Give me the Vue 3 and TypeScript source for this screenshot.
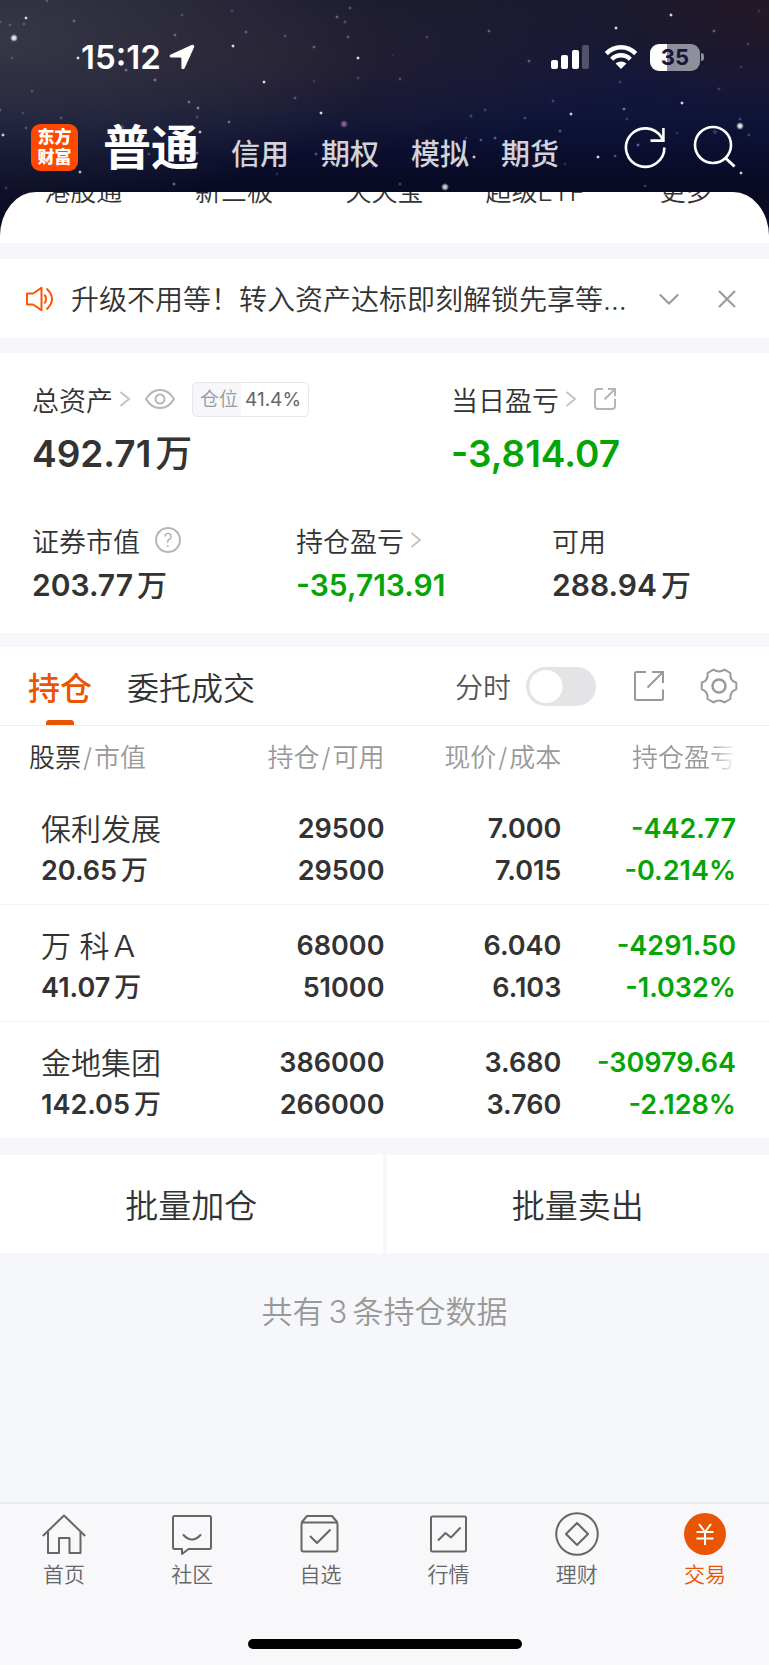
<script setup lang="ts">
import { computed, ref } from 'vue'

interface Holding {
  name: string
  value: string
  held: string
  usable: string
  price: string
  cost: string
  profit: string
  rate: string
}

interface Tab {
  id: string
  label: string
}

const accounts = ['普通', '信用', '期权', '模拟', '期货']
const activeAccount = ref('普通')
const shortcuts = ['港股通', '新三板', '天天宝', '超级ETF', '更多']

const position = ref(41.4)
const tagFill = computed(() => ({
  background: `linear-gradient(to right, #f6f7fb ${position.value}%, #ffffff ${position.value}%)`,
}))

const battery = ref(35)
const batteryFill = computed(() => ({
  background: `linear-gradient(to right, #ffffff ${battery.value}%, #8f8f9b ${battery.value}%)`,
}))

const minuteMode = ref(false)

const holdings: Holding[] = [
  { name: '保利发展', value: '20.65', held: '29500', usable: '29500', price: '7.000', cost: '7.015', profit: '-442.77', rate: '-0.214%' },
  { name: '万 科Ａ', value: '41.07', held: '68000', usable: '51000', price: '6.040', cost: '6.103', profit: '-4291.50', rate: '-1.032%' },
  { name: '金地集团', value: '142.05', held: '386000', usable: '266000', price: '3.680', cost: '3.760', profit: '-30979.64', rate: '-2.128%' },
]

const tabs: Tab[] = [
  { id: 'home', label: '首页' },
  { id: 'community', label: '社区' },
  { id: 'watch', label: '自选' },
  { id: 'market', label: '行情' },
  { id: 'wealth', label: '理财' },
  { id: 'trade', label: '交易' },
]
const activeTab = ref('trade')

// x, y, radius, opacity, colour
type Star = [number, number, number, number, string]
const W = '#ffffff'
const P = '#8b80d8'
const M = '#b38ac8'
const stars: Star[] = [
  [14, 38, 4, 0.95, W], [26, 18, 2, 0.9, W], [10, 25, 2, 0.5, P], [24, 24, 2, 0.5, P], [0, 22, 2, 0.5, P],
  [47, 1, 2, 0.5, P], [74, 21, 2, 0.7, P], [78, 58, 2, 0.95, W], [12, 58, 2, 0.4, P], [32, 91, 2, 0.5, P],
  [126, 70, 2, 0.7, M], [155, 80, 2, 0.8, M], [175, 35, 2, 0.6, M], [182, 15, 2, 0.45, P], [232, 11, 2, 0.4, P],
  [233, 46, 2, 0.95, W], [246, 32, 2, 0.7, P], [285, 36, 2, 0.5, P], [314, 47, 2, 0.6, M], [337, 17, 2, 0.7, P],
  [345, 22, 2, 0.5, P], [350, 8, 2, 0.6, P], [348, 37, 2, 0.6, P], [358, 58, 2, 0.95, W], [358, 78, 2, 0.4, P],
  [264, 82, 2, 0.95, W], [295, 98, 2, 0.6, P], [321, 113, 2, 0.95, W], [344, 124, 4, 0.7, M], [314, 81, 2, 0.3, P],
  [198, 108, 2, 0.9, M], [189, 102, 2, 0.7, M], [229, 122, 2, 0.7, M], [200, 132, 2, 0.8, W], [197, 117, 2, 0.4, P],
  [3, 135, 2, 0.9, W], [0, 110, 2, 0.6, P], [23, 113, 2, 0.4, P], [26, 128, 2, 0.5, P], [61, 118, 2, 0.5, P],
  [80, 172, 2, 0.8, W], [174, 184, 2, 0.8, P], [197, 153, 2, 0.8, P], [316, 154, 2, 0.6, P], [276, 154, 3, 0.7, P],
  [277, 174, 2, 0.3, P], [373, 166, 2, 0.4, P], [6, 188, 2, 0.4, P], [149, 154, 2, 0.5, P], [122, 127, 3, 0.4, P],
  [489, 31, 2, 0.7, P], [427, 37, 2, 0.4, P], [529, 61, 2, 0.7, P], [616, 28, 2, 0.95, W], [671, 15, 2, 0.95, W],
  [714, 31, 2, 0.6, M], [748, 44, 2, 0.4, P], [759, 11, 2, 0.3, P], [741, 67, 2, 0.3, P], [719, 89, 2, 0.4, P],
  [682, 103, 2, 0.95, W], [624, 109, 2, 0.9, P], [571, 114, 2, 0.9, W], [553, 101, 2, 0.5, P], [620, 82, 2, 0.4, P],
  [525, 118, 2, 0.5, P], [485, 110, 2, 0.4, P], [471, 116, 2, 0.5, P], [560, 131, 2, 0.6, P], [495, 138, 2, 0.7, P],
  [481, 140, 2, 0.6, P], [466, 138, 2, 0.4, P], [517, 148, 4, 0.8, P], [474, 157, 2, 0.9, W], [598, 157, 2, 0.95, W],
  [638, 145, 2, 0.8, P], [615, 156, 2, 0.6, P], [740, 126, 4, 0.95, W], [740, 119, 2, 0.5, P], [749, 135, 2, 0.5, P],
  [741, 173, 2, 0.9, W], [445, 187, 4, 0.85, W], [400, 184, 2, 0.5, P], [645, 186, 2, 0.4, P], [715, 132, 3, 0.4, P],
  [627, 119, 2, 0.4, P], [400, 79, 2, 0.5, P], [677, 133, 2, 0.3, P], [565, 164, 2, 0.3, P], [393, 55, 1, 0.5, P],
]
</script>

<template>
  <div class="page">
    <header class="hero">
      <svg class="stars" viewBox="0 0 769 243" preserveAspectRatio="xMidYMin slice" aria-hidden="true">
        <defs>
          <radialGradient v-for="c in [W, P, M]" :id="'glow' + c.slice(1)" :key="c">
            <stop offset="0" :stop-color="c" />
            <stop offset="0.4" :stop-color="c" stop-opacity="0.85" />
            <stop offset="1" :stop-color="c" stop-opacity="0" />
          </radialGradient>
        </defs>
        <circle v-for="(s, i) in stars" :key="i" :cx="s[0]" :cy="s[1]" :r="s[2]" :opacity="s[3]" :fill="'url(#glow' + s[4].slice(1) + ')'" />
      </svg>

      <div class="status">
        <span class="clock">15:12</span>
        <svg class="locate" width="26" height="26" viewBox="0 0 26 26"><path d="M1.800 10.400 22.600.9C24.400.2 25.800 1.600 25.100 3.300L15.700 24C14.900 25.800 12.400 25.500 12.400 23.500V14.600Q12.400 13.600 11.400 13.600H2.500C.2 13.600-.1 11.300 1.800 10.400z" fill="#fff" /></svg>
        <span class="spring"></span>
        <svg class="signal" width="38" height="26" viewBox="0 0 38 26" fill="#fff">
          <rect x="0" y="16" width="7" height="9" rx="2" />
          <rect x="10" y="11" width="7" height="14" rx="2" />
          <rect x="21" y="6" width="7" height="19" rx="2" />
          <rect x="31" y="1" width="7" height="24" rx="2" opacity="0.25" />
        </svg>
        <svg class="wifi" width="34" height="26" viewBox="0 0 34 26" fill="none" stroke="#fff" stroke-width="4.400">
          <path d="M2.300 9.600C10.500 1.200 23.500 1.200 31.700 9.600" />
          <path d="M7.700 15.200C12.900 10 21.100 10 26.300 15.200" />
          <path d="M11.600 19.600C14.600 16.700 19.400 16.700 22.400 19.600L17 25z" fill="#fff" stroke="none" />
        </svg>
        <span class="battery" :style="batteryFill">{{ battery }}</span>
        <span class="nub"></span>
      </div>

      <div class="topbar">
        <a class="logo" href="#" aria-label="东方财富"><span>东方</span><span>财富</span></a>
        <nav class="accounts">
          <a v-for="a in accounts" :key="a" href="#" :class="{ on: a === activeAccount }" @click.prevent="activeAccount = a">{{ a }}</a>
        </nav>
        <button class="icon refresh" type="button" aria-label="刷新">
          <svg width="44" height="44" viewBox="0 0 44 44" fill="none" stroke="#fff" stroke-width="2.600">
            <path d="M41.400 22.500A19.200 19.200 0 1 1 38.500 12.400L40.400 15.600" />
            <path d="M40.400 3v12.600H27.500" />
          </svg>
        </button>
        <button class="icon" type="button" aria-label="搜索">
          <svg width="44" height="44" viewBox="0 0 44 44" fill="none" stroke="#fff" stroke-width="2.600">
            <circle cx="20" cy="20" r="18" />
            <path d="M32.500 33 41.500 41.500" stroke-width="3" />
          </svg>
        </button>
      </div>

      <div class="sheet">
        <nav class="shortcuts">
          <a v-for="s in shortcuts" :key="s" href="#">{{ s }}</a>
        </nav>
      </div>
    </header>

    <main>
      <section class="notice">
        <svg width="28" height="26" viewBox="0 0 28 26" fill="none" stroke="#fb5607" stroke-width="2">
          <path d="M1 7.500H7L15.500 1.800V24.200L7 18.500H1z" stroke-linejoin="round" />
          <path d="M18.500 8.500Q21.500 13 18.500 17.500" />
          <path d="M20.500 2.500Q31.500 13 20.500 23.500" />
        </svg>
        <p>升级不用等！转入资产达标即刻解锁先享等…</p>
        <button class="icon" type="button" aria-label="展开">
          <svg width="20" height="20" viewBox="0 0 20 20" fill="none" stroke="#999" stroke-width="2"><path d="M.8 5.500 10 14.500 19.200 5.500" /></svg>
        </button>
        <button class="icon close" type="button" aria-label="关闭">
          <svg width="18" height="18" viewBox="0 0 18 18" fill="none" stroke="#999" stroke-width="2"><path d="M1 1 17 17M17 1 1 17" /></svg>
        </button>
      </section>

      <section class="assets">
        <div class="row two">
          <div>
            <div class="label">
              <a href="#">总资产<svg class="chev" width="12" height="16" viewBox="0 0 12 16"><path d="M1.500 1 10 8 1.500 15" /></svg></a>
              <button class="icon eye" type="button" aria-label="隐藏金额">
                <svg width="30" height="22" viewBox="0 0 30 22" fill="none" stroke="#b5b5b5" stroke-width="2">
                  <path d="M1 11C8-1 22-1 29 11 22 23 8 23 1 11z" stroke-linejoin="round" />
                  <circle cx="15" cy="11" r="4.500" />
                </svg>
              </button>
              <span class="tag" :style="tagFill"><i>仓位</i>{{ position }}%</span>
            </div>
            <div class="big">492.71<span class="wan">万</span></div>
          </div>
          <div>
            <div class="label">
              <a href="#">当日盈亏<svg class="chev" width="12" height="16" viewBox="0 0 12 16"><path d="M1.500 1 10 8 1.500 15" /></svg></a>
              <button class="icon share" type="button" aria-label="分享当日盈亏">
                <svg width="24" height="24" viewBox="0 0 24 24" fill="none" stroke="#b5b5b5" stroke-width="2">
                  <path d="M10 2H5Q2 2 2 5V19Q2 22 5 22H19Q22 22 22 19V12" />
                  <path d="M15 2H22V9M22 2 11.500 12.500" />
                </svg>
              </button>
            </div>
            <div class="big green">-3,814.07</div>
          </div>
        </div>
        <div class="row three">
          <div>
            <div class="label">
              证券市值
              <button class="icon help" type="button" aria-label="说明">?</button>
            </div>
            <div class="mid">203.77<span class="wan">万</span></div>
          </div>
          <div>
            <div class="label">
              <a href="#">持仓盈亏<svg class="chev" width="12" height="16" viewBox="0 0 12 16"><path d="M1.500 1 10 8 1.500 15" /></svg></a>
            </div>
            <div class="mid green">-35,713.91</div>
          </div>
          <div>
            <div class="label">可用</div>
            <div class="mid">288.94<span class="wan">万</span></div>
          </div>
        </div>
      </section>

      <section class="positions">
        <div class="tabs">
          <button class="tab on" type="button">持仓</button>
          <button class="tab" type="button">委托成交</button>
          <span class="spring"></span>
          <label class="switch">分时<input v-model="minuteMode" type="checkbox" role="switch" /></label>
          <button class="icon export" type="button" aria-label="分享持仓">
            <svg width="32" height="32" viewBox="0 0 32 32" fill="none" stroke="#999" stroke-width="2">
              <path d="M13 2H3.500Q2 2 2 3.500V28.500Q2 30 3.500 30H28.500Q30 30 30 28.500V19.500" />
              <path d="M19 2H30V13M30 2 14.500 17.500" />
            </svg>
          </button>
          <button class="icon gear" type="button" aria-label="设置">
            <svg width="38" height="38" viewBox="0 0 38 38" fill="none" stroke="#999" stroke-width="2">
              <path d="M13.500 2.600Q19 6.400 24.500 2.600L30.400 6Q29.500 13.500 36.300 15.800V22.200Q29.500 24.500 30.400 32L24.500 35.400Q19 31.600 13.500 35.400L7.600 32Q8.500 24.500 1.700 22.200V15.800Q8.500 13.500 7.600 6z" stroke-linejoin="round" />
              <circle cx="19" cy="19" r="6.500" stroke-width="2.400" />
            </svg>
          </button>
        </div>

        <table>
          <colgroup><col class="c1" /><col class="c2" /><col class="c3" /><col class="c4" /></colgroup>
          <thead>
            <tr>
              <th scope="col"><b>股票</b><s>/</s>市值</th>
              <th scope="col">持仓<s>/</s>可用</th>
              <th scope="col">现价<s>/</s>成本</th>
              <th scope="col"><span class="fade">持仓盈亏</span></th>
            </tr>
          </thead>
          <tbody>
            <tr v-for="h in holdings" :key="h.name">
              <td><div class="name">{{ h.name }}</div><div>{{ h.value }}<span class="wan">万</span></div></td>
              <td><div>{{ h.held }}</div><div>{{ h.usable }}</div></td>
              <td><div>{{ h.price }}</div><div>{{ h.cost }}</div></td>
              <td class="green"><div>{{ h.profit }}</div><div>{{ h.rate }}</div></td>
            </tr>
          </tbody>
        </table>
      </section>

      <div class="batch">
        <button type="button">批量加仓</button>
        <button type="button">批量卖出</button>
      </div>

      <p class="total">共有<span>{{ holdings.length }}</span>条持仓数据</p>
    </main>

    <footer class="dock">
      <nav>
        <a v-for="t in tabs" :key="t.id" href="#" :class="{ on: t.id === activeTab }" @click.prevent="activeTab = t.id">
          <svg width="44" height="44" viewBox="0 0 44 44" fill="none" stroke="currentColor" stroke-width="2" stroke-linejoin="round">
            <template v-if="t.id === 'home'">
              <path d="M.8 24 22 3.500 43.200 24" />
              <path d="M6 19.500V41H17V26H27.500V41H38.500V19.500" />
            </template>
            <template v-else-if="t.id === 'community'">
              <path d="M4.500 4H39.500Q41 4 41 5.500V35.500Q41 37 39.500 37H18.500L12 42V37H4.500Q3 37 3 35.500V5.500Q3 4 4.500 4z" />
              <path d="M13 22.500Q22 32.500 31 22.500" />
            </template>
            <template v-else-if="t.id === 'watch'">
              <path d="M3.500 10.500 9 4H34L39.500 10.500" />
              <rect x="3.500" y="10.500" width="36" height="29" rx="2" />
              <path d="M12 24 19 31 32.500 17.500" />
            </template>
            <template v-else-if="t.id === 'market'">
              <rect x="4" y="4.500" width="35" height="35" rx="1.500" />
              <path d="M11 28.500 18.500 21 24 25.500 33.500 15.500" />
            </template>
            <template v-else-if="t.id === 'wealth'">
              <circle cx="22" cy="22" r="20.800" />
              <path d="M22 11 33 22 22 33 11 22z" />
            </template>
            <template v-else>
              <circle cx="22" cy="22" r="21" fill="currentColor" stroke="none" />
              <path d="M16 12 22 20 28 12M22 20V33M13.500 20H30.500M13.500 26.500H30.500" stroke="#fff" />
            </template>
          </svg>
          {{ t.label }}
        </a>
      </nav>
      <div class="homebar"></div>
    </footer>
  </div>
</template>

<style>
body {
  margin: 0;
  background: #f7f8fb;
}
</style>

<style scoped>
.page {
  display: flex;
  flex-direction: column;
  min-height: 100vh;
  background: #f6f7fa;
  color: #333;
  font-family: Inter, "Noto Sans CJK SC", sans-serif;
  font-size: 27px;
  font-weight: 350;
}
a {
  color: inherit;
  text-decoration: none;
}
button {
  padding: 0;
  border: 0;
  background: none;
  color: inherit;
  font: inherit;
}
.icon {
  display: flex;
  align-items: center;
  justify-content: center;
}
.spring {
  flex: 1;
}
.green {
  color: #06a506;
}
.wan {
  margin-left: 4px;
  font-weight: 500;
}

.hero {
  position: relative;
  padding-top: 37px;
  background:
    radial-gradient(ellipse 50% 75% at 0% 15%, rgba(62, 62, 74, 0.8), transparent),
    radial-gradient(ellipse 50% 40% at 35% 25%, rgba(44, 36, 46, 0.65), transparent),
    radial-gradient(ellipse 25% 50% at 100% 0%, rgba(40, 24, 32, 0.7), transparent),
    linear-gradient(to bottom, #191a30 0, #14163a 80px, #0e1438 120px, #0a0d2c 160px, #080a22 191px, #0c0d26 243px);
}
.stars {
  position: absolute;
  inset: 0;
  width: 100%;
  height: 100%;
}
.status {
  position: relative;
  display: flex;
  align-items: center;
  height: 40px;
  padding: 0 65px 0 81px;
}
.clock {
  color: #fff;
  font-size: 33px;
  font-weight: 600;
}
.locate {
  margin-left: 8px;
}
.signal {
  margin-right: 15px;
}
.wifi {
  margin-right: 12px;
}
.battery {
  width: 50px;
  border-radius: 9px;
  color: #15163a;
  font-size: 22px;
  font-weight: 700;
  line-height: 27px;
  text-align: center;
}
.nub {
  width: 3px;
  height: 8px;
  margin-left: 1px;
  border-radius: 0 4px 4px 0;
  background: #8f8f9b;
}
.topbar {
  position: relative;
  display: flex;
  align-items: center;
  height: 72px;
  margin-top: 34px;
  padding: 0 32px 9px 31px;
}
.logo {
  display: flex;
  flex-direction: column;
  align-items: center;
  justify-content: center;
  width: 47px;
  height: 47px;
  border-radius: 9px;
  background: #ff4800;
  color: #fff;
  font-size: 17px;
  font-weight: 900;
  line-height: 20px;
}
.accounts {
  display: flex;
  flex: 1;
  align-items: baseline;
  gap: 32px;
  margin-left: 25px;
  padding-top: 8px;
  color: #d2d2d8;
  font-size: 29px;
  font-weight: 500;
  line-height: 60px;
  white-space: nowrap;
}
.accounts .on {
  color: #fff;
  font-size: 48px;
  font-weight: 700;
}
.refresh {
  margin-right: 26px;
}
.sheet {
  position: relative;
  overflow: hidden;
  padding-bottom: 32px;
  border-radius: 36px 36px 0 0 / 44px 44px 0 0;
  background: #fff;
}
.shortcuts {
  display: grid;
  grid-template-columns: repeat(5, 1fr);
  margin-top: -19px;
  padding: 0 8px;
  font-size: 26px;
  line-height: 38px;
  text-align: center;
}

.notice {
  display: flex;
  align-items: center;
  height: 79px;
  margin-top: 16px;
  padding: 0 33px 0 26px;
  background: #fff;
}
.notice p {
  flex: 1;
  overflow: hidden;
  margin: 0 0 2px 17px;
  font-size: 28px;
  white-space: nowrap;
  text-overflow: ellipsis;
}
.close {
  margin-left: 39px;
}

.assets {
  margin-top: 15px;
  padding: 27px 32px 26px;
  background: #fff;
}
.row {
  display: grid;
}
.two {
  grid-template-columns: 419fr 286fr;
}
.three {
  grid-template-columns: 264fr 256fr 185fr;
  margin-top: 43px;
}
.label {
  display: flex;
  align-items: center;
  height: 38px;
  white-space: nowrap;
}
.label a {
  display: flex;
  align-items: center;
}
.chev {
  margin-left: 6px;
  fill: none;
  stroke: #c4c4c4;
  stroke-width: 2;
}
.eye {
  margin: 0 17px 0 14px;
}
.share {
  margin-left: 16px;
}
.help {
  box-sizing: border-box;
  width: 26px;
  height: 26px;
  margin-left: 15px;
  border: 2px solid #b5b5b5;
  border-radius: 50%;
  color: #a8a8a8;
  font-size: 18px;
}
.tag {
  padding: 0 7px;
  border: 1px solid #e6e6e8;
  border-radius: 5px;
  color: #666;
  font-size: 19px;
  font-weight: 400;
  line-height: 33px;
}
.tag i {
  margin-right: 7px;
  color: #999;
  font-style: normal;
  font-weight: 350;
}
.big {
  margin-top: 12px;
  font-size: 37px;
  font-weight: 600;
  line-height: 48px;
}
.mid {
  margin-top: 4px;
  font-size: 30px;
  font-weight: 600;
  line-height: 44px;
}

.positions {
  margin-top: 14px;
  background: #fff;
}
.tabs {
  display: flex;
  align-items: center;
  height: 78px;
  padding: 0 31px 0 28px;
  border-bottom: 1px solid #eeeff1;
}
.tab {
  position: relative;
  height: 78px;
  margin-right: 35px;
  font-size: 32px;
}
.tab.on {
  color: #ea5504;
  font-weight: 500;
}
.tab.on::after {
  position: absolute;
  bottom: 0;
  left: 50%;
  width: 28px;
  height: 5px;
  margin-left: -14px;
  border-radius: 3px 3px 0 0;
  background: #ea5504;
  content: "";
}
.switch {
  display: flex;
  align-items: center;
  color: #555;
  font-size: 28px;
}
.switch input {
  width: 70px;
  height: 39px;
  margin: 0 0 0 15px;
  border-radius: 20px;
  background: radial-gradient(circle 17px at 20px 50%, #fff 16px, transparent 17px) #e4e4e6;
  appearance: none;
}
.switch input:checked {
  background: radial-gradient(circle 17px at 50px 50%, #fff 16px, transparent 17px) #ea5504;
}
.export {
  margin-left: 37px;
}
.gear {
  margin-left: 35px;
}
table {
  width: 100%;
  border-collapse: separate;
  border-spacing: 0;
  table-layout: fixed;
}
.c1 {
  width: 24%;
}
.c2 {
  width: 26%;
}
.c3 {
  width: 23%;
}
.c4 {
  width: 27%;
}
th {
  height: 58px;
  padding: 0 0 4px;
  color: #999;
  font-size: 26px;
  font-weight: 350;
  text-align: right;
  white-space: nowrap;
}
th:first-child {
  padding-left: 29px;
  text-align: left;
}
th b {
  color: #333;
  font-weight: 350;
}
th s {
  margin: 0 2px;
  text-decoration: none;
}
.fade {
  mask-image: linear-gradient(to right, #000 75%, transparent);
}
td {
  padding: 20px 0 12px;
  border-bottom: 1px solid #f3f4f6;
  font-size: 27px;
  font-weight: 600;
  line-height: 42px;
  text-align: right;
  white-space: nowrap;
}
td:first-child {
  padding-left: 41px;
  text-align: left;
}
th:last-child,
td:last-child {
  padding-right: 33px;
}
td .name {
  font-size: 30px;
  font-weight: 350;
}

.batch {
  display: grid;
  grid-template-columns: 1fr 1fr;
  gap: 4px;
  margin-top: 16px;
}
.batch button {
  height: 98px;
  background: #fff;
  font-size: 33px;
}
.total {
  margin: 35px 0;
  color: #999;
  font-size: 31px;
  line-height: 48px;
  text-align: center;
}
.total span {
  margin: 0 5px;
}

.dock {
  margin-top: auto;
  padding-bottom: 16px;
  border-top: 2px solid #e9ebee;
  background: #f8f8fb;
}
.dock nav {
  display: grid;
  grid-template-columns: repeat(6, 1fr);
  padding-top: 8px;
}
.dock a {
  display: flex;
  flex-direction: column;
  align-items: center;
  gap: 5px;
  color: #666;
  font-size: 21px;
  line-height: 28px;
}
.dock a.on {
  color: #ea5504;
}
.homebar {
  width: 274px;
  height: 10px;
  margin: 50px auto 0;
  border-radius: 5px;
  background: #000;
}
</style>
